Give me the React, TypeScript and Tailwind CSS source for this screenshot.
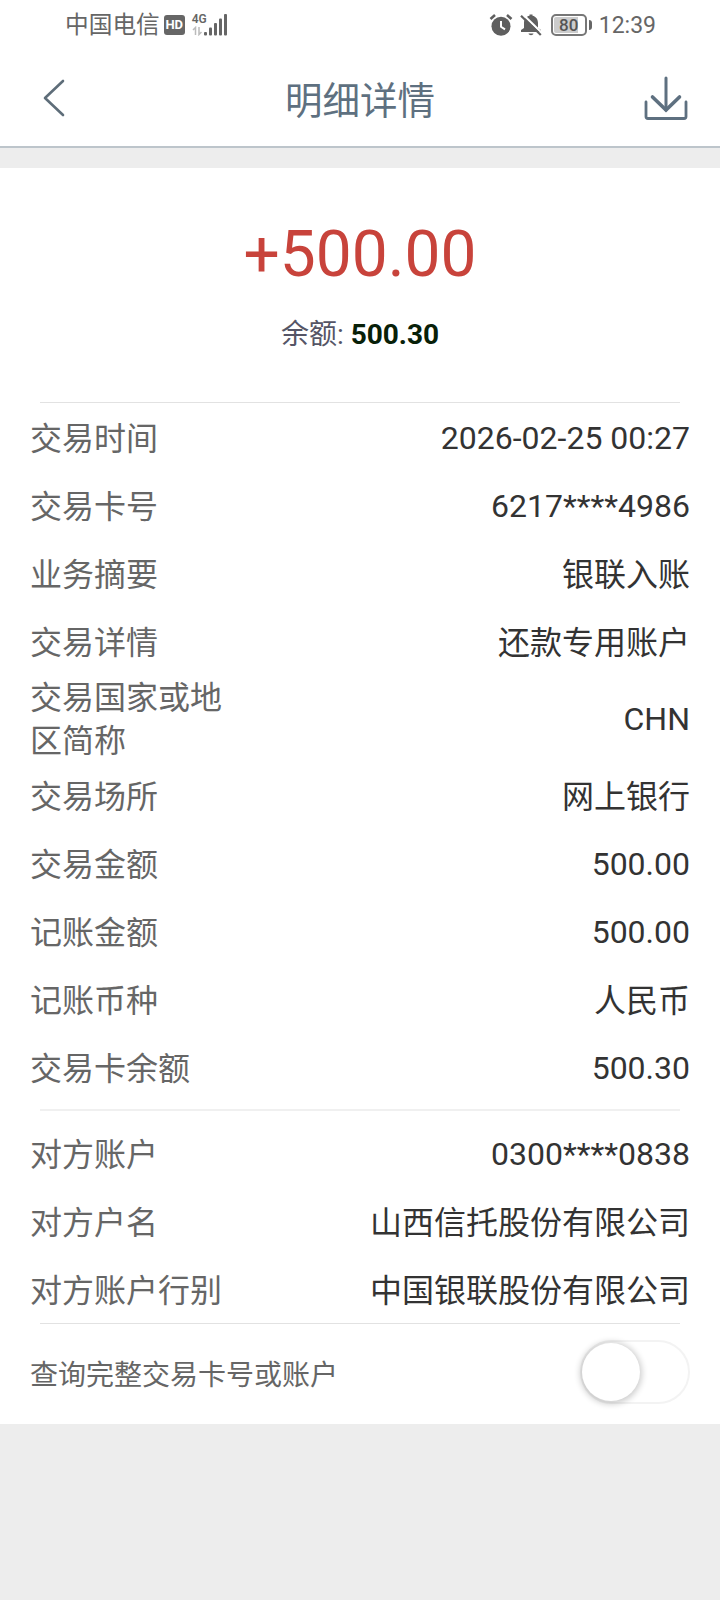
import React, { useState } from 'react';

interface Detail {
  label: string;
  value: string;
  cjk?: boolean;
}

const transactionDetails: Detail[] = [
  { label: '交易时间', value: '2026-02-25 00:27' },
  { label: '交易卡号', value: '6217****4986' },
  { label: '业务摘要', value: '银联入账', cjk: true },
  { label: '交易详情', value: '还款专用账户', cjk: true },
  { label: '交易国家或地区简称', value: 'CHN' },
  { label: '交易场所', value: '网上银行', cjk: true },
  { label: '交易金额', value: '500.00' },
  { label: '记账金额', value: '500.00' },
  { label: '记账币种', value: '人民币', cjk: true },
  { label: '交易卡余额', value: '500.30' },
];

const counterpartyDetails: Detail[] = [
  { label: '对方账户', value: '0300****0838' },
  { label: '对方户名', value: '山西信托股份有限公司', cjk: true },
  { label: '对方账户行别', value: '中国银联股份有限公司', cjk: true },
];

const SignalIcon: React.FC = () => (
  <svg className="h-6 w-4 shrink-0 overflow-visible" viewBox="0 0 16 24" fill="#666">
    <rect x="0" y="19" width="3" height="3.5" rx="1" />
    <rect x="5" y="14.5" width="3" height="8" rx="1" />
    <rect x="10" y="10" width="3" height="12.5" rx="1" />
    <rect x="15" y="5.500" width="3" height="17" rx="1" />
    <rect x="20" y="1" width="3" height="21.5" rx="1" />
  </svg>
);

const AlarmIcon: React.FC = () => (
  <svg className="h-6 w-6" viewBox="0 0 24 24" fill="none">
    <path d="M1.5 6 6 2M18 2l4.500 4" stroke="#5f5f5f" strokeWidth="2.600" />
    <circle cx="12" cy="13.200" r="9.500" fill="#5f5f5f" />
    <path d="M12 8v5.800l4 2.600" stroke="#fff" strokeWidth="2" />
  </svg>
);

const MutedBellIcon: React.FC = () => (
  <svg className="ml-1.5 h-6 w-6" viewBox="0 0 24 24" fill="none">
    <path
      d="M2 19v-2l3-2V10c0-3.500 2-6.500 5.500-7.200V1.500h3v1.300C17 3.500 19 6.500 19 10v5l3 2v2z"
      fill="#5f5f5f"
    />
    <path d="M9.500 20.500h5c-.5 2.200-4.500 2.200-5 0z" fill="#5f5f5f" />
    <path d="M3.500 1 24 21" stroke="#fff" strokeWidth="2.200" />
    <path d="M2 2.700 21.800 22" stroke="#5f5f5f" strokeWidth="2.200" />
  </svg>
);

const StatusBar: React.FC = () => (
  <div className="flex h-[50px] items-center justify-between pr-16 pl-[65px] text-[#666]">
    <div className="flex items-center">
      <span className="text-[23.700px] leading-6">中国电信</span>
      <span className="ml-1 flex h-5 w-[21px] items-center justify-center rounded-[3px] bg-[#666] font-[Roboto] text-[13px] font-bold text-white">
        HD
      </span>
      <div className="ml-[7px] flex h-6 w-3 flex-col">
        <span className="font-[Roboto] text-[12px] leading-[13px] font-semibold">4G</span>
        <svg className="h-2.5 w-3" viewBox="0 0 12 10" fill="none" stroke="#bbb" strokeWidth="1.500">
          <path d="M1 4l2.500-2.500V9M7 1v7.500L9.500 6" />
        </svg>
      </div>
      <SignalIcon />
    </div>
    <div className="flex items-center">
      <AlarmIcon />
      <MutedBellIcon />
      <div className="ml-2 flex items-center">
        <div className="flex h-[22px] w-[36px] rounded-[5px] border-2 border-[#777] p-px">
          <div className="flex h-full w-full items-center justify-center rounded-[2px] bg-linear-to-r from-[#ccc] from-80% to-white to-80% font-[Roboto] text-[17px] leading-4 font-medium text-[#555]">
            80
          </div>
        </div>
        <div className="ml-0.5 h-2.5 w-[3px] rounded-r-sm bg-[#666]" />
      </div>
      <span className="ml-[7px] pt-0.5 font-[Roboto] text-[23px]">12:39</span>
    </div>
  </div>
);

const Header: React.FC = () => (
  <header className="flex h-[98px] items-center justify-between border-b-2 border-[#bdc5cb] pr-8 pl-[42px]">
    <button>
      <svg className="h-10 w-[34px]" viewBox="0 0 34 40" fill="none" stroke="#5e6d79" strokeWidth="2.600">
        <path d="M21 3 3 20l18 17" strokeLinecap="round" strokeLinejoin="round" />
      </svg>
    </button>
    <h1 className="pt-[7px] text-[37.500px] leading-none text-[#5e7080]">明细详情</h1>
    <button>
      <svg className="h-11 w-11" viewBox="0 0 44 44" fill="none" stroke="#5e7080" strokeLinecap="round">
        <path d="M22 2v32" strokeWidth="3" />
        <path d="M8.500 21 22 34l13.500-13" strokeWidth="3.600" />
        <path d="M2 26v14.500q0 2 2 2h36q2 0 2-2V26" strokeWidth="2.800" />
      </svg>
    </button>
  </header>
);

const DetailRow: React.FC<Detail> = ({ label, value, cjk }) => (
  <div className="flex min-h-[68px] items-center justify-between px-[30px] text-[32px] leading-[43px]">
    <span className="w-[200px] translate-y-px text-[#666]">{label}</span>
    <span className={`text-right text-[#333] ${cjk ? 'translate-y-px' : ''}`}>{value}</span>
  </div>
);

const Divider: React.FC = () => <div className="mx-10 h-px bg-[#e2e2e2]" />;

export default function App() {
  const [showFull, setShowFull] = useState(false);

  return (
    <div className="min-h-[1600px] w-[720px] bg-[#ededed] font-[Roboto,'Noto_Sans_CJK_SC',sans-serif]">
      <div className="bg-white">
        <StatusBar />
        <Header />
      </div>

      <main className="mt-5 h-[1256px] bg-white">
        <section className="flex h-[234px] flex-col items-center pt-[55px]">
          <div className="text-[64px] leading-[64px] text-[#c8433b]">+500.00</div>
          <div className="mt-8 text-[28px] leading-8 text-[#555566]">
            余额: <span className="font-bold text-[#082008]">500.30</span>
          </div>
        </section>

        <Divider />
        <section className="pt-px pb-[7px]">
          {transactionDetails.map((item) => (
            <DetailRow key={item.label} {...item} />
          ))}
        </section>

        <div className="mx-10 h-0.5 bg-[#f0f0f0]" />
        <section className="-mb-px pt-[9px]">
          {counterpartyDetails.map((item) => (
            <DetailRow key={item.label} {...item} />
          ))}
        </section>

        <Divider />
        <div className="flex h-24 items-center justify-between px-[30px]">
          <span className="pt-2 text-[28px] text-[#666]">查询完整交易卡号或账户</span>
          <button
            role="switch"
            aria-checked={showFull}
            onClick={() => setShowFull(!showFull)}
            className={`flex h-16 w-[110px] items-center rounded-full border-2 border-[#f3f3f3] ${
              showFull ? 'justify-end bg-green-400' : 'bg-white'
            }`}
          >
            <span className="h-[58px] w-[58px] rounded-full bg-white shadow-[0_1px_6px_2px_rgba(0,0,0,0.2)]" />
          </button>
        </div>
      </main>
    </div>
  );
}
